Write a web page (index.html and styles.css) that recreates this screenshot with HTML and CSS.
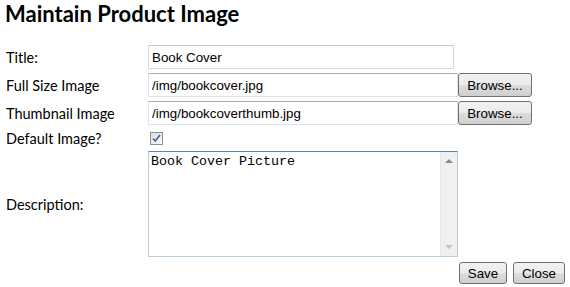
FILE: index.html
```html
<!DOCTYPE html>
<html lang="en">

<head>
    <meta charset="UTF-8">
    <title>Maintain Product Image</title>
    <link rel="stylesheet" href="styles.css">
</head>

<body>
    <div class="page">
        <h1>Maintain Product Image</h1>
        <div class="form-grid">
            <label class="label" for="title">Title:</label>
            <input type="text" class="textbox short" id="title" value="Book Cover">
            <span></span>

            <label class="label" for="full">Full Size Image</label>
            <input type="text" class="textbox" id="full" value="/img/bookcover.jpg">
            <button class="button browse">Browse...</button>

            <label class="label" for="thumb">Thumbnail Image</label>
            <input type="text" class="textbox" id="thumb" value="/img/bookcoverthumb.jpg">
            <button class="button browse">Browse...</button>

            <span class="label">Default Image?</span>
            <div class="check-cell">
                <span class="checkbox">
                    <svg width="11" height="11" viewBox="0 0 11 11">
                        <path d="M2 5.5 L4.3 8 L9 2" fill="none" stroke="#4a62a8" stroke-width="1.7" />
                    </svg>
                </span>
            </div>
            <span></span>

            <label class="label" for="desc">Description:</label>
            <div class="textarea-wrap">
                <textarea id="desc" class="description">Book Cover Picture</textarea>
                <div class="scrollbar">
                    <span class="arrow up"></span>
                    <span class="arrow down"></span>
                </div>
            </div>
            <span></span>

            <span></span>
            <span></span>
            <div class="actions">
                <button class="button save">Save</button>
                <button class="button close">Close</button>
            </div>
        </div>
    </div>
</body>

</html>
```

FILE: styles.css
```css
* {
    box-sizing: border-box;
}

body {
    margin: 0;
    background-color: white;
    color: black;
    font-family: Lato, "Open Sans", sans-serif;
}

.page {
    padding: 0 0 0 6px;
}

h1 {
    margin: 0 0 17px -1px;
    font-size: 22px;
    line-height: 28px;
    font-weight: bold;
}

.form-grid {
    display: grid;
    grid-template-columns: 142px 311px auto;
    row-gap: 4px;
    align-items: center;
}

.label {
    font-size: 14.5px;
}

.textbox {
    width: 310px;
    height: 24px;
    padding: 0 3px;
    font-family: "Liberation Sans", Arial, sans-serif;
    font-size: 13.33px;
    color: black;
    border: 1px solid #e2e3ea;
    border-top-color: #abadb3;
    outline: none;
}

.textbox.short {
    width: 306px;
    border-color: #d9d9d9;
    border-top-color: #c8c8c8;
}

.button {
    height: 24px;
    padding: 0 6px;
    font-family: "Liberation Sans", Arial, sans-serif;
    font-size: 13.33px;
    color: black;
    background: linear-gradient(#f2f2f2 0%, #ebebeb 50%, #dddddd 51%, #cfcfcf 100%);
    border: 1px solid #707070;
    border-radius: 3px;
}

.browse {
    width: 74px;
    margin-left: -1px;
}

.check-cell {
    height: 18px;
    display: flex;
    align-items: center;
    padding-left: 2px;
}

.checkbox {
    width: 13px;
    height: 13px;
    border: 1px solid #8e8f8f;
    background: linear-gradient(135deg, #dcdcdc, #fbfbfb);
    display: flex;
    align-items: center;
    justify-content: center;
}

.textarea-wrap {
    width: 310px;
    height: 106px;
    display: flex;
    border: 1px solid #b6cde3;
    border-top-color: #5e87b0;
}

.description {
    flex: 1;
    border: none;
    outline: none;
    resize: none;
    padding: 2px 2px;
    font-family: "Liberation Mono", "Courier New", monospace;
    font-size: 13.33px;
    overflow: hidden;
}

.scrollbar {
    width: 17px;
    background-color: #f0f0f0;
    border-left: 1px solid #e6e6e6;
    display: flex;
    flex-direction: column;
    justify-content: space-between;
    align-items: center;
    padding: 7px 0;
}

.arrow {
    width: 0;
    height: 0;
    border-left: 4px solid transparent;
    border-right: 4px solid transparent;
}

.arrow.up {
    border-bottom: 4px solid #8a8a8a;
}

.arrow.down {
    border-top: 4px solid #c2c2c2;
}

.actions {
    display: flex;
    gap: 6px;
    margin-top: 1px;
    white-space: nowrap;
}

.save {
    width: 48px;
    height: 22px;
}

.close {
    width: 52px;
    height: 22px;
}
```
